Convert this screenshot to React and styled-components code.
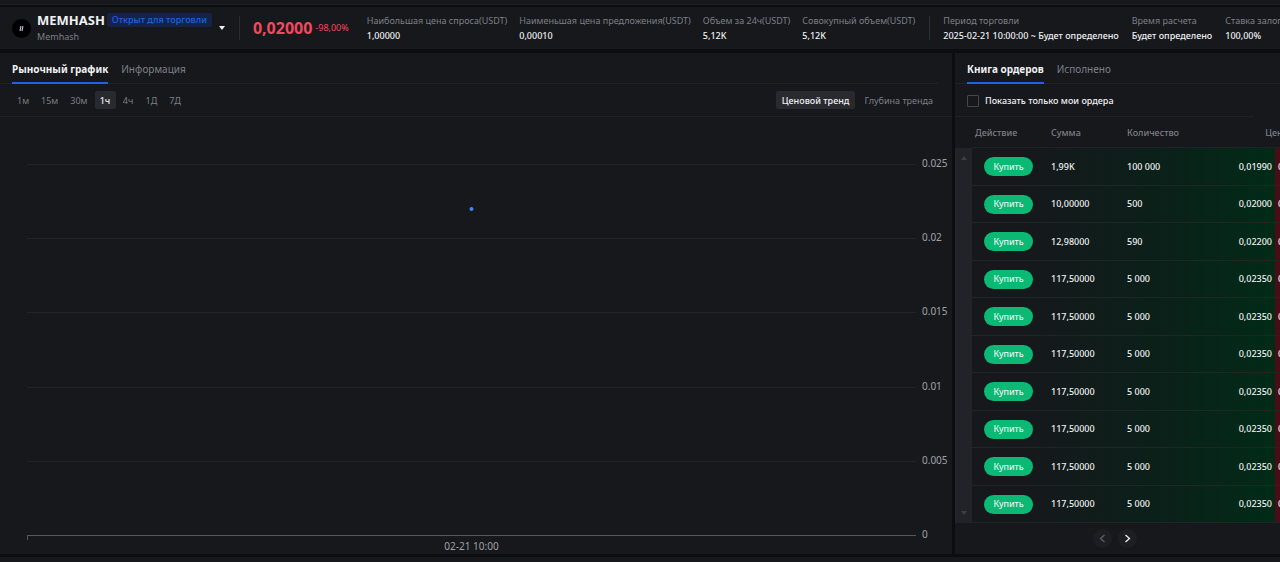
import React, { useState } from "react";
import styled, { createGlobalStyle } from "styled-components";

const c = {
  bg: "#16181c",
  gap: "#0c0d10",
  line: "#202226",
  text: "#f0f1f3",
  muted: "#7c7f87",
  blue: "#2560e0",
  red: "#f5475d",
  green: "#0bb974",
};

const GlobalStyle = createGlobalStyle`
  * { box-sizing: border-box; }
  body {
    margin: 0;
    background: ${c.gap};
    color: ${c.text};
    font-family: "Noto Sans", "Open Sans", sans-serif;
    font-size: 9px;
    line-height: 12px;
    overflow: hidden;
  }
  button, input { font: inherit; color: inherit; margin: 0; }
  button { border: 0; padding: 0; background: none; cursor: pointer; }
`;

const Page = styled.div`
  display: flex;
  flex-direction: column;
  min-height: 100vh;
  overflow: hidden;
`;

const TopStrip = styled.div`
  height: 5px;
  flex: none;
  background: ${c.bg};
  border-bottom: 1px solid ${c.line};
`;

const BottomStrip = styled.footer`
  flex: 1;
  min-height: 5px;
  margin-top: 3px;
  background: ${c.bg};
`;

const Header = styled.header`
  display: flex;
  align-items: center;
  height: 42px;
  margin: 2px 0 4px;
  padding-left: 12px;
  background: ${c.bg};
  overflow: hidden;
  white-space: nowrap;
`;

const Logo = styled.svg`
  flex: none;
  width: 19px;
  height: 19px;
  margin-right: 6px;
`;

const Names = styled.div`
  flex: none;
  padding-top: 2px;
`;

const NameLine = styled.div`
  display: flex;
  align-items: center;
  gap: 2px;
  height: 16px;
`;

const Symbol = styled.h1`
  margin: 0;
  font-size: 13px;
  line-height: 16px;
  font-weight: 700;
`;

const Badge = styled.span`
  padding: 0 5px;
  border-radius: 2px;
  background: #142347;
  color: ${c.blue};
  line-height: 14px;
  font-weight: 500;
`;

const FullName = styled.div`
  color: ${c.muted};
  line-height: 18px;
`;

const MenuButton = styled.button`
  flex: none;
  display: flex;
  margin: 0 14px 0 7px;
`;

const Divider = styled.div`
  flex: none;
  width: 1px;
  height: 24px;
  margin-right: 13px;
  background: #2a2c31;
`;

const Price = styled.div`
  flex: none;
  display: flex;
  align-items: center;
  gap: 3px;
  margin-right: 18px;
  color: ${c.red};
`;

const PriceValue = styled.strong`
  font-size: 16px;
  line-height: 20px;
`;

const Stats = styled.dl`
  flex: none;
  display: flex;
  gap: ${(p) => p.$gap}px;
  margin: 0 14px 0 0;
`;

const Stat = styled.div`
  dt { color: ${c.muted}; line-height: 15px; }
  dd { margin: 0; line-height: 15px; font-weight: 500; }
`;

const Main = styled.main`
  display: flex;
  gap: 3px;
`;

const Panel = styled.section`
  background: ${c.bg};
  min-width: 0;
  flex: ${(p) => (p.$width ? `0 0 ${p.$width}px` : "1")};
  height: 501px;
  overflow: hidden;
`;

const Tabs = styled.div`
  display: flex;
  gap: 13px;
  height: 31px;
  margin-right: ${(p) => p.$inset || 0}px;
  padding-left: 12px;
  border-bottom: 1px solid ${c.line};
`;

const Tab = styled.button`
  height: 31px;
  padding-top: 2px;
  font-size: 10px;
  line-height: 14px;
  font-weight: ${(p) => (p.$active ? 700 : 400)};
  color: ${(p) => (p.$active ? c.text : c.muted)};
  border-bottom: 2px solid ${(p) => (p.$active ? c.blue : "transparent")};
`;

const Toolbar = styled.div`
  display: flex;
  align-items: center;
  justify-content: space-between;
  height: 33px;
  padding: 0 13px 0 12px;
  border-bottom: 1px solid ${c.line};
`;

const ButtonGroup = styled.div`
  display: flex;
  gap: ${(p) => p.$gap || 0}px;
`;

const Chip = styled.button`
  height: 18px;
  min-width: 21px;
  padding: 1px ${(p) => p.$pad || 5}px 0;
  border-radius: 2px;
  color: ${(p) => (p.$active ? c.text : c.muted)};
  font-weight: ${(p) => (p.$active ? 500 : 400)};
  background: ${(p) => (p.$active ? "#282a2f" : "transparent")};
`;

const Chart = styled.div`
  display: grid;
  grid-template-columns: 1fr 26px;
  column-gap: 6px;
  padding: 38px 4px 0 27px;
`;

const Plot = styled.svg`
  display: block;
  width: 100%;
  height: 385px;
`;

const YAxis = styled.div`
  display: flex;
  flex-direction: column;
  justify-content: space-between;
  height: 383px;
  margin-top: 2px;
  color: #a0a2a8;
  font-size: 10px;
`;

const XAxis = styled.div`
  text-align: center;
  color: #a0a2a8;
  font-size: 10px;
  line-height: 12px;
`;

const Filter = styled.label`
  display: flex;
  align-items: center;
  gap: 6px;
  height: 33px;
  margin-right: 26px;
  padding: 1px 0 0 12px;
  border-bottom: 1px solid ${c.line};
  font-weight: 500;
`;

const Checkbox = styled.input`
  appearance: none;
  width: 12px;
  height: 12px;
  border: 1px solid #44474e;
  border-radius: 1px;
  &:checked { background: ${c.blue}; }
`;

const Book = styled.div`
  display: flex;
`;

const ScrollTrack = styled.div`
  flex: none;
  display: flex;
  flex-direction: column;
  justify-content: space-between;
  align-items: center;
  width: 17px;
  margin-top: 31px;
  padding: 8px 0;
  background: #222328;
`;

const Orders = styled.table`
  flex: none;
  width: 381px;
  table-layout: fixed;
  border-collapse: separate;
  border-spacing: 0;
  text-align: left;
`;

const Th = styled.th`
  height: 31px;
  padding: 1px 0 0 ${(p) => p.$pad || 0}px;
  border-bottom: 1px solid ${c.line};
  color: ${c.muted};
  font-weight: 500;
  text-align: ${(p) => (p.$center ? "center" : "left")};
`;

const Row = styled.tr`
  height: 38px;
  background: linear-gradient(90deg, transparent 50px, #0a2119 200px, #012b17 303px, #4a0c16 303px);
  &:nth-child(even) { height: 37px; }
`;

const Td = styled.td`
  padding: 0 ${(p) => (p.$right ? 3 : 0)}px 0 ${(p) => p.$pad || 0}px;
  border-bottom: 1px solid #1d2723;
  font-weight: 500;
  text-align: ${(p) => (p.$right ? "right" : "left")};
`;

const BuyButton = styled.button`
  display: block;
  width: 49px;
  height: 19px;
  border-radius: 10px;
  background: ${c.green};
  color: #fff;
  font-weight: 400;
`;

const Pager = styled.nav`
  display: flex;
  justify-content: center;
  gap: 6px;
  padding: 6px 6px 0 0;
`;

const PageButton = styled.button`
  display: flex;
  align-items: center;
  justify-content: center;
  width: 19px;
  height: 19px;
  border-radius: 50%;
  background: #1c1e22;
  color: ${(p) => (p.disabled ? "#5c5f66" : c.text)};
`;

const Arrow = ({ up, color = "#3d3f45" }) => (
  <svg width="6" height="4" viewBox="0 0 6 4" aria-hidden="true">
    <path d={up ? "M0 4 3 0l3 4z" : "M0 0h6L3 4z"} fill={color} />
  </svg>
);

const Chevron = ({ d }) => (
  <svg width="7" height="9" viewBox="0 0 7 9" fill="none" stroke="currentColor" strokeWidth="1.3" aria-hidden="true">
    <path d={d} />
  </svg>
);

const marketStats = [
  ["Наибольшая цена спроса(USDT)", "1,00000"],
  ["Наименьшая цена предложения(USDT)", "0,00010"],
  ["Объем за 24ч(USDT)", "5,12K"],
  ["Совокупный объем(USDT)", "5,12K"],
];

const periodStats = [
  ["Период торговли", "2025-02-21 10:00:00 ~ Будет определено"],
  ["Время расчета", "Будет определено"],
  ["Ставка залога", "100,00%"],
];

const periods = ["1м", "15м", "30м", "1ч", "4ч", "1Д", "7Д"];
const yTicks = ["0.025", "0.02", "0.015", "0.01", "0.005", "0"];
const gridLines = [9, 83, 157, 232, 306];

const orders = [
  ["1,99K", "100 000", "0,01990"],
  ["10,00000", "500", "0,02000"],
  ["12,98000", "590", "0,02200"],
  ...Array.from({ length: 7 }, () => ["117,50000", "5 000", "0,02350"]),
];

function StatList({ items, gap }) {
  return (
    <Stats $gap={gap}>
      {items.map(([label, value]) => (
        <Stat key={label}>
          <dt>{label}</dt>
          <dd>{value}</dd>
        </Stat>
      ))}
    </Stats>
  );
}

export default function App() {
  const [period, setPeriod] = useState("1ч");
  return (
    <>
      <GlobalStyle />
      <Page>
        <TopStrip />
        <Header>
          <Logo viewBox="0 0 19 19" aria-hidden="true">
            <circle cx="9.500" cy="9.500" r="9.500" fill="#000" />
            <path d="M8.900 7 8.100 12M10.900 7l-.8 5" stroke="#d4d5d7" strokeWidth="1" />
            <path d="M7.600 8.700h4M7.300 10.400h4" stroke="#8a8b8e" strokeWidth=".5" />
          </Logo>
          <Names>
            <NameLine>
              <Symbol>MEMHASH</Symbol>
              <Badge>Открыт для торговли</Badge>
            </NameLine>
            <FullName>Memhash</FullName>
          </Names>
          <MenuButton aria-label="Выбрать рынок">
            <Arrow color={c.text} />
          </MenuButton>
          <Divider />
          <Price>
            <PriceValue>0,02000</PriceValue>
            <span>-98,00%</span>
          </Price>
          <StatList items={marketStats} gap={12} />
          <Divider />
          <StatList items={periodStats} gap={13} />
        </Header>
        <Main>
          <Panel>
            <Tabs $inset={14}>
              <Tab $active>Рыночный график</Tab>
              <Tab>Информация</Tab>
            </Tabs>
            <Toolbar>
              <ButtonGroup $gap={2}>
                {periods.map((p) => (
                  <Chip key={p} $active={p === period} onClick={() => setPeriod(p)}>
                    {p}
                  </Chip>
                ))}
              </ButtonGroup>
              <ButtonGroup $gap={3}>
                <Chip $active $pad={6}>Ценовой тренд</Chip>
                <Chip $pad={6}>Глубина тренда</Chip>
              </ButtonGroup>
            </Toolbar>
            <Chart>
              <Plot role="img" aria-label="Ценовой тренд">
                {gridLines.map((y) => (
                  <rect key={y} x="0" y={y} width="100%" height="1" fill="#222428" />
                ))}
                <rect x="0" y="380" width="100%" height="1" fill="#56585d" />
                <rect x="0" y="380" width="1" height="5" fill="#56585d" />
                <circle cx="50%" cy="54" r="2" fill="#4285f5" />
              </Plot>
              <YAxis>
                {yTicks.map((t) => (
                  <span key={t}>{t}</span>
                ))}
              </YAxis>
              <XAxis>02-21 10:00</XAxis>
            </Chart>
          </Panel>
          <Panel $width={325}>
            <Tabs>
              <Tab $active>Книга ордеров</Tab>
              <Tab>Исполнено</Tab>
            </Tabs>
            <Filter>
              <Checkbox type="checkbox" />
              Показать только мои ордера
            </Filter>
            <Book>
              <ScrollTrack>
                <Arrow up />
                <Arrow />
              </ScrollTrack>
              <Orders>
                <colgroup>
                  <col width="79" />
                  <col width="76" />
                  <col width="73" />
                  <col width="75" />
                  <col width="78" />
                </colgroup>
                <thead>
                  <tr>
                    <Th $pad={3}>Действие</Th>
                    <Th>Сумма</Th>
                    <Th>Количество</Th>
                    <Th colSpan={2} $center>Цена</Th>
                  </tr>
                </thead>
                <tbody>
                  {orders.map(([sum, amount, price], i) => (
                    <Row key={i}>
                      <Td $pad={12}>
                        <BuyButton>Купить</BuyButton>
                      </Td>
                      <Td>{sum}</Td>
                      <Td>{amount}</Td>
                      <Td $right>{price}</Td>
                      <Td $pad={3}>0,02500</Td>
                    </Row>
                  ))}
                </tbody>
              </Orders>
            </Book>
            <Pager aria-label="Страницы">
              <PageButton disabled aria-label="Назад">
                <Chevron d="M5.500 1 1.500 4.500l4 3.500" />
              </PageButton>
              <PageButton aria-label="Вперед">
                <Chevron d="M1.500 1l4 3.500-4 3.500" />
              </PageButton>
            </Pager>
          </Panel>
        </Main>
        <BottomStrip />
      </Page>
    </>
  );
}
